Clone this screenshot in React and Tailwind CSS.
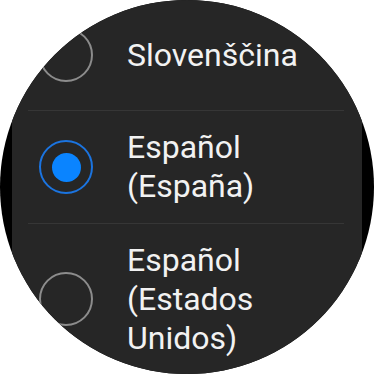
import React from "react";

function Radio({ selected }) {
  if (selected) {
    return (
      <div className="w-[54px] h-[54px] shrink-0 rounded-full border-2 border-[#1b74e0] flex items-center justify-center">
        <div className="w-[29px] h-[29px] rounded-full bg-[#0a84ff]" />
      </div>
    );
  }
  return <div className="w-[54px] h-[54px] shrink-0 rounded-full border-2 border-[#8c8c8c]" />;
}

function Row({ h, selected, lines }) {
  return (
    <div className={`flex items-center pl-[27px] gap-[34px] ${h}`}>
      <Radio selected={selected} />
      <div className="text-[32px] leading-[39px] text-[#f2f2f2]" style={{ fontFamily: "Roboto, 'Noto Sans', sans-serif" }}>
        {lines.map((l, i) => (
          <div key={i}>{l}</div>
        ))}
      </div>
    </div>
  );
}

export default function App() {
  return (
    <div className="w-[374px] h-[374px] bg-white">
      <div className="w-full h-full rounded-full bg-black overflow-hidden">
        <div className="mx-[12px] h-full bg-[#262626] flex flex-col">
          <Row h="h-[110px]" lines={["Slovenščina"]} />
          <div className="h-px bg-[#363636] ml-[16px] mr-[18px]" />
          <Row h="h-[112px]" selected lines={["Español", "(España)"]} />
          <div className="h-px bg-[#363636] ml-[16px] mr-[18px]" />
          <Row h="h-[150px]" lines={["Español", "(Estados", "Unidos)"]} />
        </div>
      </div>
    </div>
  );
}
